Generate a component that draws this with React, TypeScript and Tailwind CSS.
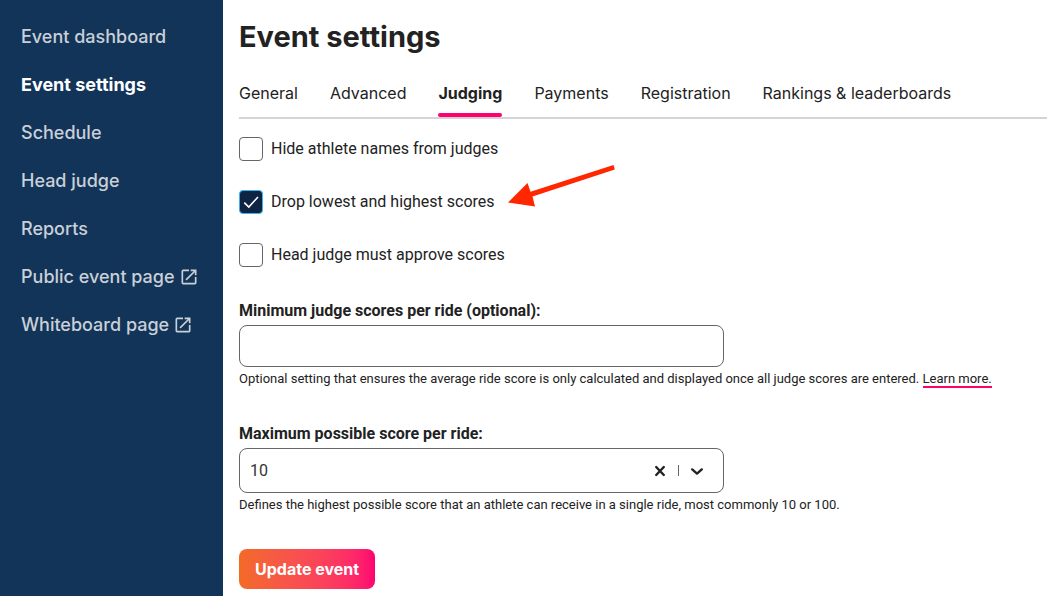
import React, { useState } from "react";
import { MdOpenInNew } from "react-icons/md";

const navItems = [
  { label: "Event dashboard" },
  { label: "Event settings", active: true },
  { label: "Schedule" },
  { label: "Head judge" },
  { label: "Reports" },
  { label: "Public event page", external: true },
  { label: "Whiteboard page", external: true },
];

const tabs = [
  "General",
  "Advanced",
  "Judging",
  "Payments",
  "Registration",
  "Rankings & leaderboards",
];

const Sidebar = () => {
  return (
    <nav className="w-[223px] shrink-0 bg-[#133459] pt-[13px] font-[Inter,sans-serif] text-lg">
      {navItems.map(({ label, active, external }) => (
        <a
          key={label}
          href="#"
          className={`flex h-12 items-center gap-1 pl-[21px] ${
            active ? "font-bold text-white" : "font-medium text-[#c9d0d8]"
          }`}
        >
          {label}
          {external && <MdOpenInNew className="size-5" />}
        </a>
      ))}
    </nav>
  );
};

const Tabs = () => {
  const [current, setCurrent] = useState("Judging");

  return (
    <div
      role="tablist"
      className="flex gap-8 border-b-2 border-[#d4d4d4] font-[Inter,sans-serif]"
    >
      {tabs.map((tab) => (
        <button
          key={tab}
          role="tab"
          aria-selected={tab === current}
          onClick={() => setCurrent(tab)}
          className="flex flex-col whitespace-nowrap"
        >
          <span className={tab === current ? "font-bold" : ""}>{tab}</span>
          <span
            className={`mt-2 h-1 w-full rounded-sm ${
              tab === current ? "bg-[#ff0070]" : ""
            }`}
          />
        </button>
      ))}
    </div>
  );
};

type CheckboxProps = {
  id: string;
  label: string;
  defaultChecked?: boolean;
};

const Checkbox = ({ id, label, defaultChecked }: CheckboxProps) => {
  return (
    <div className="flex items-center gap-2">
      <span className="grid size-6">
        <input
          id={id}
          type="checkbox"
          defaultChecked={defaultChecked}
          className="peer col-start-1 row-start-1 size-6 appearance-none rounded border border-[#666] bg-white checked:border-[#35b5f0] checked:bg-[#0f2342]"
        />
        <svg
          viewBox="0 0 24 24"
          fill="none"
          stroke="white"
          strokeWidth="1.6"
          className="pointer-events-none invisible col-start-1 row-start-1 size-6 peer-checked:visible"
        >
          <path d="M5.3 12.6L9.8 17L19 7" />
        </svg>
      </span>
      <label htmlFor={id}>{label}</label>
    </div>
  );
};

const App = () => {
  const [score, setScore] = useState("10");

  return (
    <div className="flex min-h-screen bg-white font-[Roboto,sans-serif] text-base text-[#222]">
      <Sidebar />

      <main className="min-w-0 flex-1 pt-5 pr-3 pl-4">
        <h1 className="mb-[27px] font-[Inter,sans-serif] text-[29px] leading-[34px] font-bold">
          Event settings
        </h1>
        <Tabs />

        {/* Judging options */}
        <div className="mt-[18px] flex flex-col gap-[29px]">
          <Checkbox id="hide-names" label="Hide athlete names from judges" />
          <div className="relative">
            <Checkbox
              id="drop-scores"
              label="Drop lowest and highest scores"
              defaultChecked
            />
            <svg
              viewBox="0 0 108 44"
              fill="#ff2600"
              aria-hidden="true"
              className="absolute -top-[26px] left-[269px] h-11 w-[108px]"
            >
              <path d="M0 38.5L19.5 19L22.5 27.8L105.5 1L106.8 5.5L24.5 32.5L27 42.5Z" />
            </svg>
          </div>
          <Checkbox id="head-approve" label="Head judge must approve scores" />
        </div>

        {/* Minimum scores */}
        <div className="mt-8 flex flex-col">
          <label htmlFor="min-scores" className="mb-[2px] font-bold">
            Minimum judge scores per ride (optional):
          </label>
          <input
            id="min-scores"
            type="text"
            className="h-[42px] w-full max-w-[485px] rounded-lg border border-[#666] px-2.5"
          />
          <p className="mt-[2px] text-[13px] leading-5">
            Optional setting that ensures the average ride score is only
            calculated and displayed once all judge scores are entered.{" "}
            <a href="#" className="border-b-2 border-[#ff0070]">
              Learn more.
            </a>
          </p>
        </div>

        {/* Maximum score */}
        <div className="mt-[33px] flex flex-col">
          <label htmlFor="max-score" className="mb-[2px] font-bold">
            Maximum possible score per ride:
          </label>
          <div className="flex h-[45px] w-full max-w-[485px] items-center rounded-lg border border-[#666] pr-[18px] pl-2.5">
            <select
              id="max-score"
              value={score}
              onChange={(e) => setScore(e.target.value)}
              className="h-full flex-1 appearance-none bg-transparent text-[#333]"
            >
              <option value=""></option>
              <option value="10">10</option>
              <option value="100">100</option>
            </select>
            <button type="button" aria-label="Clear" onClick={() => setScore("")}>
              <svg
                viewBox="0 0 16 16"
                stroke="currentColor"
                strokeWidth="2.4"
                strokeLinecap="round"
                className="size-4"
              >
                <path d="M4.2 4L11.8 12M11.8 4L4.2 12" />
              </svg>
            </button>
            <span className="mx-2.5 h-[11px] w-px bg-[#666]" />
            <svg
              viewBox="0 0 16 16"
              fill="none"
              stroke="currentColor"
              strokeWidth="2.4"
              strokeLinecap="round"
              strokeLinejoin="round"
              className="size-4"
            >
              <path d="M3.2 6.4L8 10.6L12.8 6.4" />
            </svg>
          </div>
          <p className="mt-[2px] text-[13px] leading-5">
            Defines the highest possible score that an athlete can receive in a
            single ride, most commonly 10 or 100.
          </p>
        </div>

        <button
          type="submit"
          className="mt-[34px] h-10 rounded-lg bg-linear-to-r from-[#f36a26] to-[#ff0070] px-4 font-[Inter,sans-serif] font-bold text-white"
        >
          Update event
        </button>
      </main>
    </div>
  );
};

export default App;
